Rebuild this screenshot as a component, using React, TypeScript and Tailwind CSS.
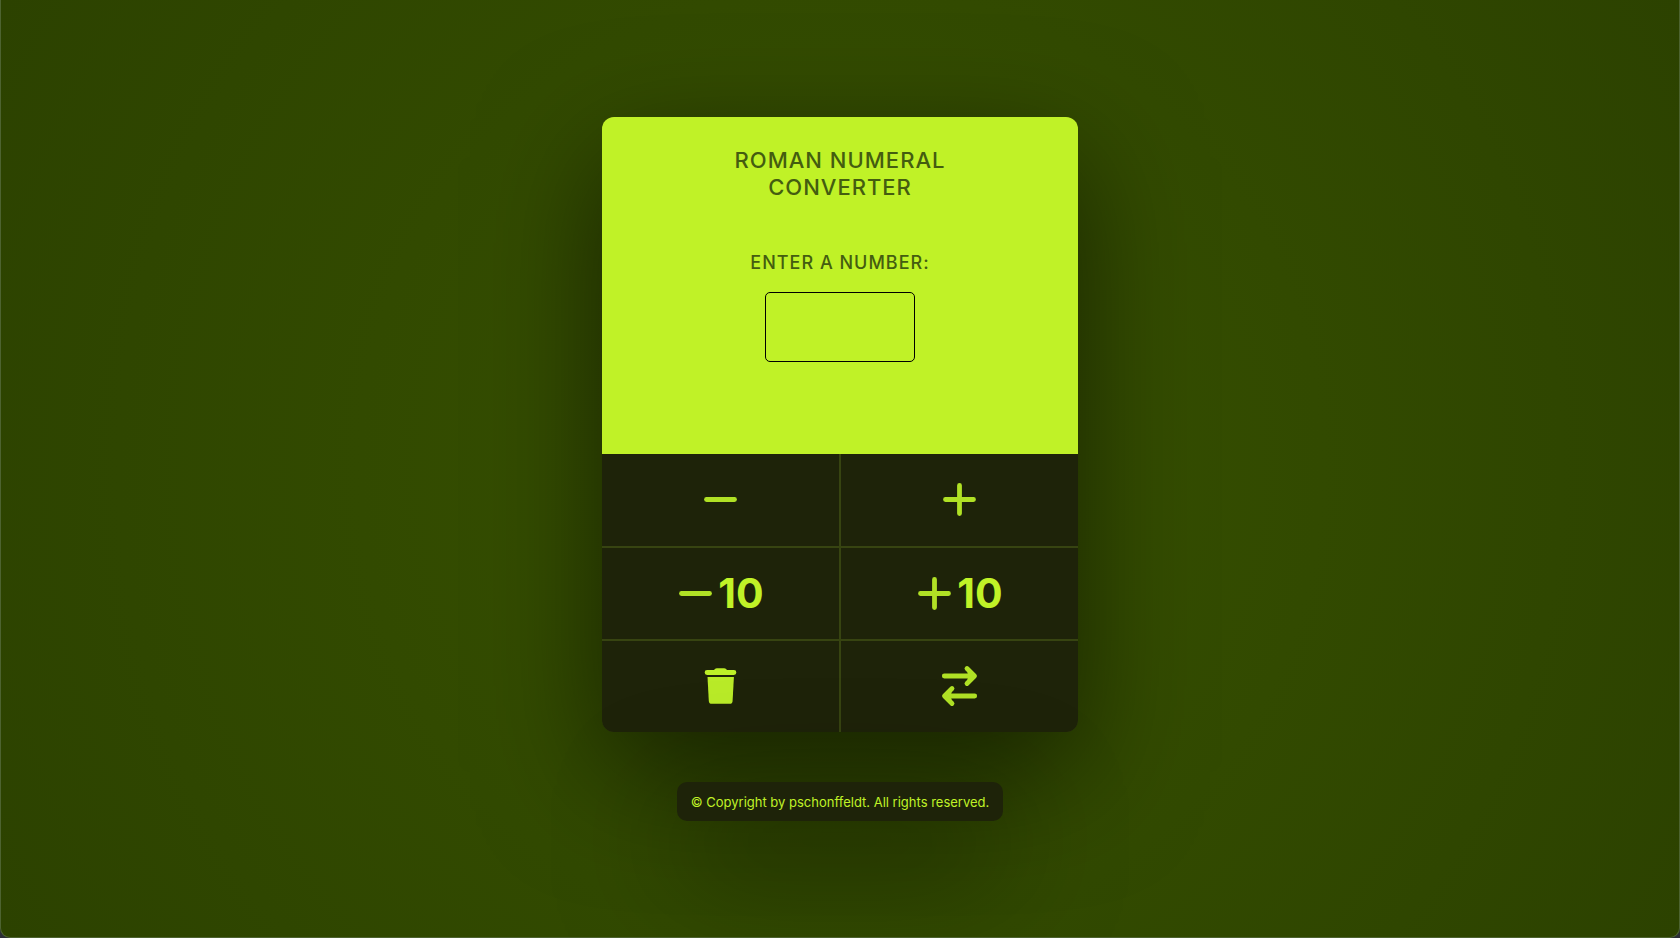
import { useState } from "react";
import type { ReactNode } from "react";

function Icon({ children }: { children: ReactNode }) {
  return (
    <svg
      viewBox="0 0 45 45"
      className="size-[45px] shrink-0"
      fill="none"
      stroke="#b0e125"
      strokeWidth="4.8"
      strokeLinecap="round"
      strokeLinejoin="round"
      aria-hidden="true"
    >
      {children}
    </svg>
  );
}

const Minus = () => (
  <Icon>
    <path d="M8.5 22.5h28" />
  </Icon>
);

const Plus = () => (
  <Icon>
    <path d="M22.5 8.5v28M8.5 22.5h28" />
  </Icon>
);

const Ten = () => <span className="mr-1 pt-px">10</span>;

const Trash = () => (
  <Icon>
    <path
      fill="#bdf028"
      stroke="none"
      d="M16 6Q17 4.2 18.8 4.2h7.4Q28 4.2 29 6h6.9a2.4 2.4 0 0 1 0 4.9H9.1a2.4 2.4 0 0 1 0-4.9z"
    />
    <path
      fill="#b9eb28"
      stroke="none"
      d="M9.5 12.9h26.4l-1.3 24q-.2 2.9-3 2.9H13.8q-2.8 0-3-2.9z"
    />
  </Icon>
);

const Swap = () => (
  <Icon>
    <path d="M7.3 12h30M30 4.5l7.5 7.5L30 19.5M37.7 32h-30M15 24.5L7.5 32l7.5 7.5" />
    <path fill="#b0e125" stroke="none" d="M30 4.5l7.5 7.5L30 19.5l1-7.5zM15 24.5L7.5 32l7.5 7.5L14 32z" />
  </Icon>
);

const NUMERALS: [number, string][] = [
  [1000, "M"], [900, "CM"], [500, "D"], [400, "CD"], [100, "C"], [90, "XC"],
  [50, "L"], [40, "XL"], [10, "X"], [9, "IX"], [5, "V"], [4, "IV"], [1, "I"],
];

function toRoman(n: number) {
  let rest = n;
  let out = "";
  for (const [value, symbol] of NUMERALS) {
    while (rest >= value) {
      out += symbol;
      rest -= value;
    }
  }
  return out;
}

function Key({ label, onClick, children }: { label: string; onClick: () => void; children: ReactNode }) {
  return (
    <button
      type="button"
      aria-label={label}
      onClick={onClick}
      className="flex cursor-pointer items-center justify-center bg-[#1e2309] text-[41px] font-bold text-[#c0f227] hover:bg-[#272d0c]"
    >
      {children}
    </button>
  );
}

export default function App() {
  const [value, setValue] = useState("");
  const [roman, setRoman] = useState("");

  const step = (by: number) => {
    setValue(String(Math.min(3999, Math.max(0, (Number(value) || 0) + by))));
    setRoman("");
  };

  return (
    <div className="bg-[#2b2e36] font-['Inter',sans-serif]">
      <main className="flex min-h-screen flex-col items-center justify-center gap-[50px] overflow-hidden rounded-b-[10px] border-x border-b border-[#4d6330] bg-[radial-gradient(circle,#385200,#2c4200)]">
        <section className="w-full max-w-[476px] overflow-hidden rounded-[12px] bg-[#374411] shadow-[0_40px_120px_rgba(0,0,0,0.55)]">
          <div className="flex min-h-[337px] flex-col items-center bg-[#c0f227] px-8 pt-[30px] text-center font-medium text-[#445d10] uppercase">
            <h1 className="max-w-[260px] text-[22px] leading-[27px] tracking-[1px]">Roman numeral converter</h1>
            <label htmlFor="number" className="mt-[51px] text-[18px] leading-[22px] tracking-[1px]">
              Enter a number:
            </label>
            <input
              id="number"
              inputMode="numeric"
              value={value}
              onChange={(e) => setValue(e.target.value.replace(/\D/g, "").slice(0, 4))}
              className="mt-[18px] h-[70px] w-[150px] rounded-[5px] border border-black bg-transparent text-center text-[32px] outline-none"
            />
            <output htmlFor="number" className="mt-4 text-[24px]">{roman}</output>
          </div>
          <div className="grid grid-cols-2 grid-rows-[92px_91px_91px] gap-[2px]">
            <Key label="Subtract 1" onClick={() => step(-1)}><Minus /></Key>
            <Key label="Add 1" onClick={() => step(1)}><Plus /></Key>
            <Key label="Subtract 10" onClick={() => step(-10)}><Minus /><Ten /></Key>
            <Key label="Add 10" onClick={() => step(10)}><Plus /><Ten /></Key>
            <Key label="Clear" onClick={() => { setValue(""); setRoman(""); }}><Trash /></Key>
            <Key label="Convert" onClick={() => setRoman(toRoman(Number(value)))}><Swap /></Key>
          </div>
        </section>
        <footer className="rounded-[10px] bg-[#1e2309] px-[14px] pt-[11px] pb-[9px] text-[13px] leading-[19px] text-[#c0f227] shadow-[0_40px_120px_rgba(0,0,0,0.75)]">
          © Copyright by pschonffeldt. All rights reserved.
        </footer>
      </main>
    </div>
  );
}
